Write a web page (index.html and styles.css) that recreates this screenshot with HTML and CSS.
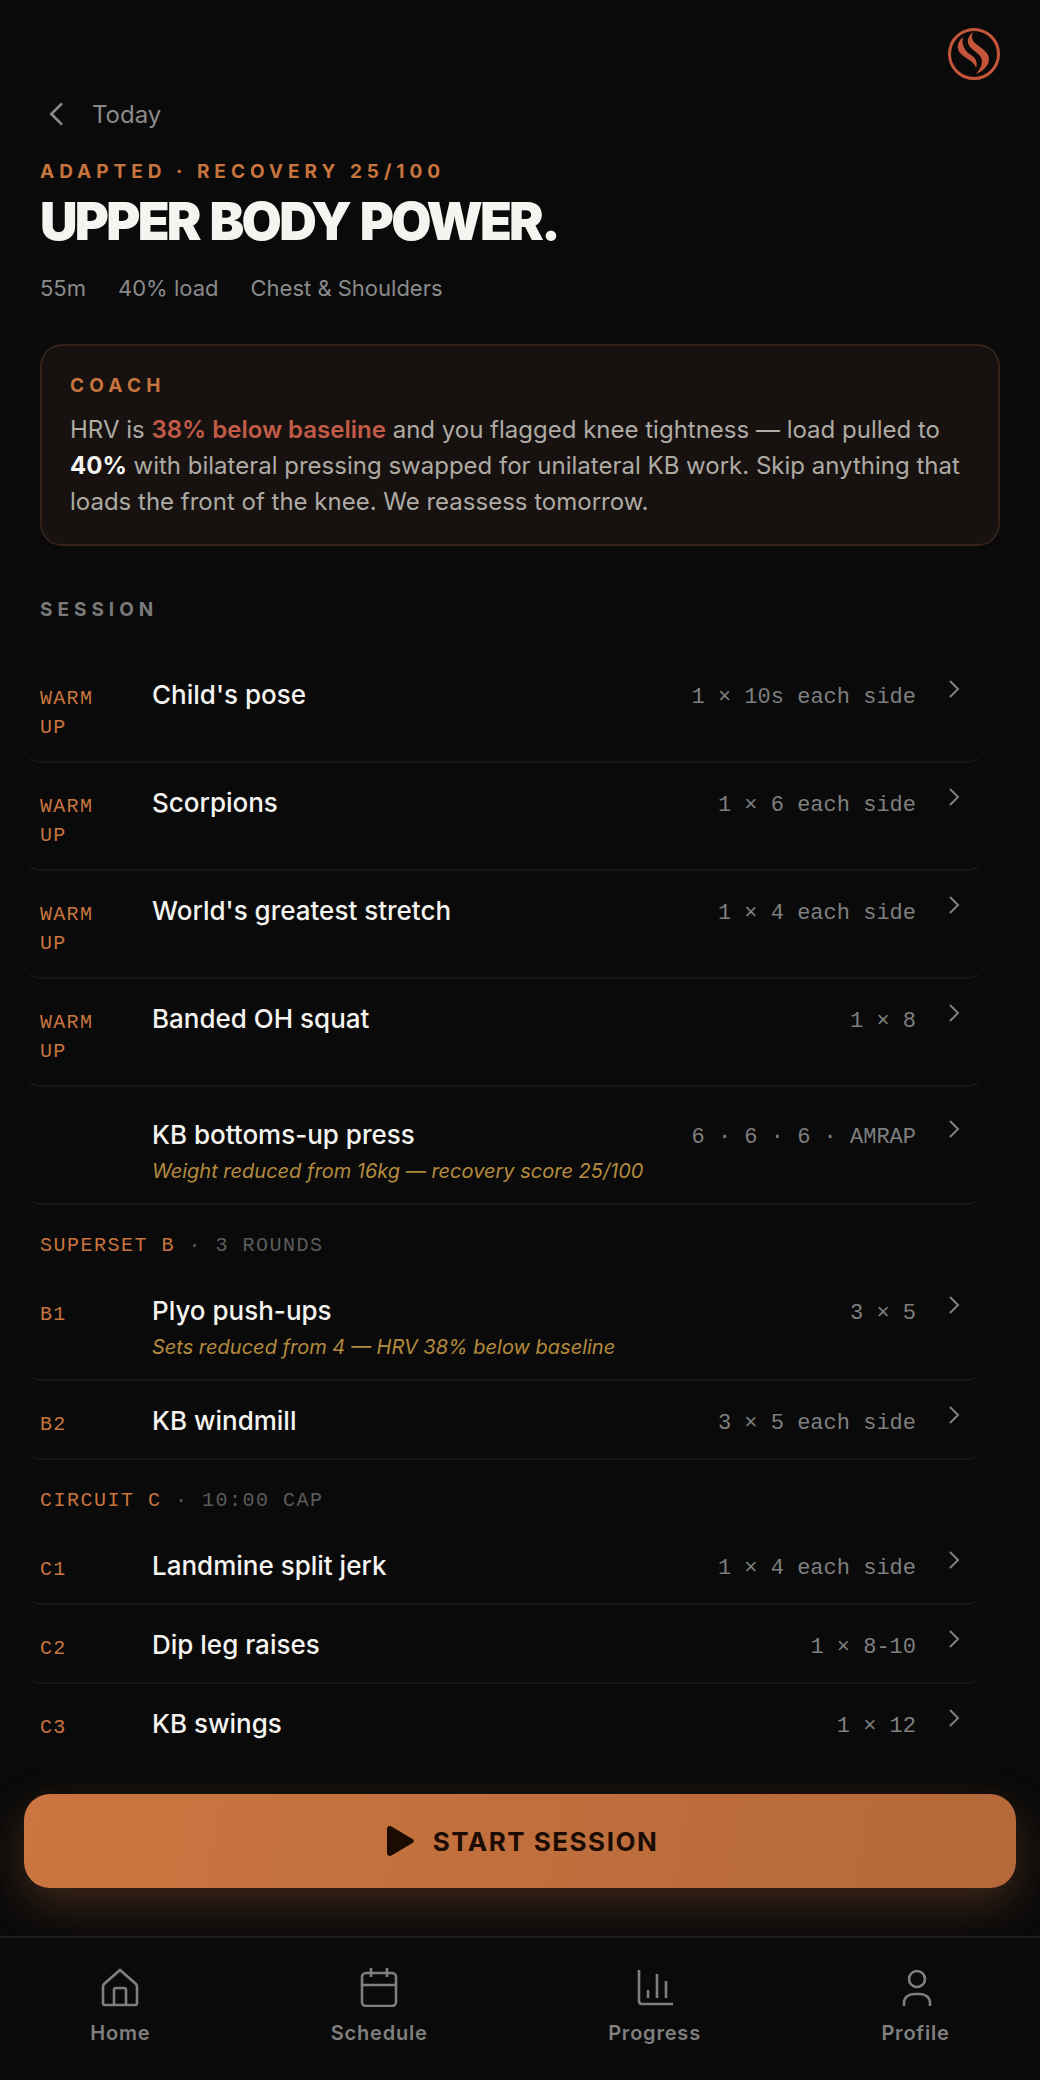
FILE: index.html
```html
<!DOCTYPE html>
<html lang="en">
<head>
  <meta charset="UTF-8" />
  <title>Upper Body Power</title>
  <link rel="stylesheet" href="styles.css">
</head>
<body>
  <div class="app">
    <main class="content">
      <div class="topbar">
        <svg class="logo" viewBox="0 0 52 52" fill="none">
          <circle cx="26" cy="26" r="24.5" stroke="#c4553b" stroke-width="3"/>
          <path d="M25 4 C19 9 18 15 23 20 C28 25 34 27 34 34 C34 38 31 42 28 46 C35 43 41 38 41 31 C41 24 33 20 28 16 C24 13 23 9 25 4 Z" fill="#c4553b"/>
          <path d="M15 9 C9 14 8 21 13 26 C18 31 26 33 28 40 C30 35 28 30 23 27 C18 24 13 18 15 9 Z" fill="#c4553b"/>
        </svg>
      </div>

      <div class="back">
        <svg class="back-icon" viewBox="0 0 24 24" fill="none"><path d="M15 4 L7 12 L15 20"/></svg>
        <span>Today</span>
      </div>

      <div class="eyebrow">ADAPTED · RECOVERY 25/100</div>
      <h1 class="title">UPPER BODY POWER.</h1>
      <div class="meta">
        <span>55m</span>
        <span>40% load</span>
        <span>Chest &amp; Shoulders</span>
      </div>

      <section class="coach">
        <div class="coach-label">COACH</div>
        <p>HRV is <span class="hot">38% below baseline</span> and you flagged knee tightness — load pulled to <strong>40%</strong> with bilateral pressing swapped for unilateral KB work. Skip anything that loads the front of the knee. We reassess tomorrow.</p>
      </section>

      <div class="section-label">SESSION</div>

      <div class="list">
        <div class="row tall">
          <div class="tag">WARM UP</div>
          <div class="main"><div class="name">Child's pose</div></div>
          <div class="dose">1 × 10s each side</div>
          <svg class="chev" viewBox="0 0 24 24" fill="none"><path d="M8 4 L16 12 L8 20"/></svg>
        </div>
        <div class="row tall">
          <div class="tag">WARM UP</div>
          <div class="main"><div class="name">Scorpions</div></div>
          <div class="dose">1 × 6 each side</div>
          <svg class="chev" viewBox="0 0 24 24" fill="none"><path d="M8 4 L16 12 L8 20"/></svg>
        </div>
        <div class="row tall">
          <div class="tag">WARM UP</div>
          <div class="main"><div class="name">World's greatest stretch</div></div>
          <div class="dose">1 × 4 each side</div>
          <svg class="chev" viewBox="0 0 24 24" fill="none"><path d="M8 4 L16 12 L8 20"/></svg>
        </div>
        <div class="row tall">
          <div class="tag">WARM UP</div>
          <div class="main"><div class="name">Banded OH squat</div></div>
          <div class="dose">1 × 8</div>
          <svg class="chev" viewBox="0 0 24 24" fill="none"><path d="M8 4 L16 12 L8 20"/></svg>
        </div>
        <div class="row spaced">
          <div class="tag"></div>
          <div class="main">
            <div class="name">KB bottoms-up press</div>
            <div class="note">Weight reduced from 16kg — recovery score 25/100</div>
          </div>
          <div class="dose">6 · 6 · 6 · AMRAP</div>
          <svg class="chev" viewBox="0 0 24 24" fill="none"><path d="M8 4 L16 12 L8 20"/></svg>
        </div>

        <div class="group"><span class="group-name">SUPERSET B</span> · 3 ROUNDS</div>
        <div class="row">
          <div class="tag">B1</div>
          <div class="main">
            <div class="name">Plyo push-ups</div>
            <div class="note">Sets reduced from 4 — HRV 38% below baseline</div>
          </div>
          <div class="dose">3 × 5</div>
          <svg class="chev" viewBox="0 0 24 24" fill="none"><path d="M8 4 L16 12 L8 20"/></svg>
        </div>
        <div class="row">
          <div class="tag">B2</div>
          <div class="main"><div class="name">KB windmill</div></div>
          <div class="dose">3 × 5 each side</div>
          <svg class="chev" viewBox="0 0 24 24" fill="none"><path d="M8 4 L16 12 L8 20"/></svg>
        </div>

        <div class="group"><span class="group-name">CIRCUIT C</span> · 10:00 CAP</div>
        <div class="row">
          <div class="tag">C1</div>
          <div class="main"><div class="name">Landmine split jerk</div></div>
          <div class="dose">1 × 4 each side</div>
          <svg class="chev" viewBox="0 0 24 24" fill="none"><path d="M8 4 L16 12 L8 20"/></svg>
        </div>
        <div class="row">
          <div class="tag">C2</div>
          <div class="main"><div class="name">Dip leg raises</div></div>
          <div class="dose">1 × 8-10</div>
          <svg class="chev" viewBox="0 0 24 24" fill="none"><path d="M8 4 L16 12 L8 20"/></svg>
        </div>
        <div class="row">
          <div class="tag">C3</div>
          <div class="main"><div class="name">KB swings</div></div>
          <div class="dose">1 × 12</div>
          <svg class="chev" viewBox="0 0 24 24" fill="none"><path d="M8 4 L16 12 L8 20"/></svg>
        </div>
      </div>
    </main>

    <div class="cta-wrap">
      <button class="cta">
        <svg class="play" viewBox="0 0 27 30"><path d="M0 3 C0 0.5 2.5 -0.6 4.5 0.6 L25.5 13 C27.5 14.2 27.5 15.8 25.5 17 L4.5 29.4 C2.5 30.6 0 29.5 0 27 Z"/></svg>
        START SESSION
      </button>
    </div>

    <nav class="nav">
      <div class="nav-item">
        <svg viewBox="0 0 40 40" fill="none"><path d="M4 17 L20 3 L36 17 Q37 18 37 20 V36 Q37 38 35 38 H5 Q3 38 3 36 V20 Q3 18 4 17 Z"/><path d="M14 38 V23 Q14 21 16 21 H24 Q26 21 26 23 V38"/></svg>
        <span>Home</span>
      </div>
      <div class="nav-item">
        <svg viewBox="0 0 40 40" fill="none"><rect x="3" y="6" width="34" height="33" rx="4"/><path d="M3 18 H37"/><path d="M12 1 V10"/><path d="M28 1 V10"/></svg>
        <span>Schedule</span>
      </div>
      <div class="nav-item">
        <svg viewBox="0 0 40 40" fill="none"><path d="M4 3 V34 Q4 37 7 37 H38"/><path d="M13 23 V31"/><path d="M22 7 V31"/><path d="M31 14 V31"/></svg>
        <span>Progress</span>
      </div>
      <div class="nav-item">
        <svg viewBox="0 0 40 40" fill="none"><circle cx="21" cy="12" r="8"/><path d="M8 39 V36 C8 30 13 27 18 27 H24 C29 27 34 30 34 36 V39"/></svg>
        <span>Profile</span>
      </div>
    </nav>
  </div>
</body>
</html>
```

FILE: styles.css
```css
* {
  box-sizing: border-box;
}

body {
  margin: 0;
  background-color: #0a0a0a;
  font-family: "Inter", "Liberation Sans", sans-serif;
  color: #f5f4f0;
}

.app {
  height: 2080px;
  display: flex;
  flex-direction: column;
  overflow: hidden;
}

.content {
  flex: 1;
  min-height: 0;
  overflow: hidden;
  padding: 0 40px;
  position: relative;
}

.content::after {
  content: "";
  position: absolute;
  left: 0;
  right: 0;
  bottom: 0;
  height: 24px;
  background: linear-gradient(to bottom, rgba(10, 10, 10, 0), #0a0a0a 70%);
}

.topbar {
  display: flex;
  justify-content: flex-end;
  padding-top: 28px;
}

.logo {
  width: 52px;
  height: 52px;
}

.back {
  display: flex;
  align-items: center;
  gap: 18px;
  margin-top: 4px;
  height: 60px;
  font-size: 24px;
  color: #8a8a8a;
}

.back-icon {
  width: 32px;
  height: 32px;
  margin-left: 2px;
}

.back-icon path {
  stroke: #8a8a8a;
  stroke-width: 2;
}

.eyebrow {
  margin-top: 16px;
  font-size: 19px;
  font-weight: 700;
  letter-spacing: 5px;
  color: #c8743f;
}

.title {
  margin: 9px 0 0;
  font-size: 52px;
  line-height: 60px;
  font-weight: 900;
  letter-spacing: -2.7px;
  word-spacing: 3px;
}

.meta {
  display: flex;
  gap: 32px;
  margin-top: 23px;
  font-size: 22px;
  color: #8a8a8a;
}

.coach {
  margin-top: 43px;
  padding: 28px 28px 24px;
  border: 2px solid #33231a;
  border-radius: 22px;
  background-color: #171210;
}

.coach-label {
  font-size: 19px;
  font-weight: 700;
  letter-spacing: 5.2px;
  color: #c8743f;
}

.coach p {
  margin: 15px 0 0;
  font-size: 24px;
  line-height: 36px;
  color: #aeaaa4;
}

.hot {
  color: #c25b47;
  font-weight: 600;
}

.coach strong {
  color: #f5f4f0;
  font-weight: 700;
}

.section-label {
  margin-top: 52px;
  font-size: 19px;
  font-weight: 700;
  letter-spacing: 5px;
  color: #7a7a7a;
}

.list {
  margin: 34px 18px 0 -14px;
}

.row {
  display: flex;
  align-items: flex-start;
  padding: 22px 16px 19px 14px;
  border-bottom: 2px solid #161616;
  border-radius: 0 0 14px 14px;
}

.row.tall {
  min-height: 108px;
}

.row.spaced {
  padding-top: 30px;
}

.tag {
  width: 112px;
  flex-shrink: 0;
  padding-top: 7px;
  padding-right: 40px;
  font-family: "Liberation Mono", "DejaVu Sans Mono", monospace;
  font-size: 20px;
  line-height: 29px;
  letter-spacing: 1.3px;
  color: #c8743f;
}

.main {
  flex: 1;
}

.name {
  font-size: 26px;
  line-height: 36px;
  font-weight: 500;
  color: #f5f4f0;
}

.note {
  margin-top: 4px;
  margin-bottom: -1px;
  font-size: 20px;
  line-height: 28px;
  font-style: italic;
  color: #b48a3e;
}

.dose {
  padding-top: 6px;
  font-family: "Liberation Mono", "DejaVu Sans Mono", monospace;
  font-size: 22px;
  line-height: 30px;
  color: #7f7f7f;
  white-space: nowrap;
}

.chev {
  width: 24px;
  height: 24px;
  margin-left: 26px;
  flex-shrink: 0;
}

.chev path {
  stroke: #7f7f7f;
  stroke-width: 2;
}

.group {
  padding: 28px 14px 12px;
  font-family: "Liberation Mono", "DejaVu Sans Mono", monospace;
  font-size: 20px;
  line-height: 26px;
  letter-spacing: 1.5px;
  color: #5c5c5c;
}

.group-name {
  color: #c8743f;
}

.cta-wrap {
  padding: 24px 24px 48px;
}

.cta {
  width: 100%;
  height: 94px;
  display: flex;
  justify-content: center;
  align-items: center;
  gap: 19px;
  padding-left: 11px;
  border: none;
  border-radius: 26px;
  background: linear-gradient(100deg, #cb7640, #b5683a);
  box-shadow: 0 16px 44px rgba(200, 116, 63, 0.28);
  font-family: "Inter", "Liberation Sans", sans-serif;
  font-size: 26px;
  font-weight: 700;
  letter-spacing: 1.5px;
  color: #1c0b03;
}

.play {
  width: 27px;
  height: 30px;
  fill: #1c0b03;
}

.nav {
  height: 144px;
  display: flex;
  justify-content: space-around;
  padding-top: 29px;
  border-top: 2px solid #1c1c1c;
  background-color: #0a0a0a;
  position: relative;
}

.nav-item {
  display: flex;
  flex-direction: column;
  align-items: center;
  gap: 14px;
  font-size: 20px;
  font-weight: 600;
  letter-spacing: 0.8px;
  color: #7f7f7f;
}

.nav-item svg {
  width: 40px;
  height: 40px;
}

.nav-item svg * {
  stroke: #7f7f7f;
  stroke-width: 2.6;
}
```
